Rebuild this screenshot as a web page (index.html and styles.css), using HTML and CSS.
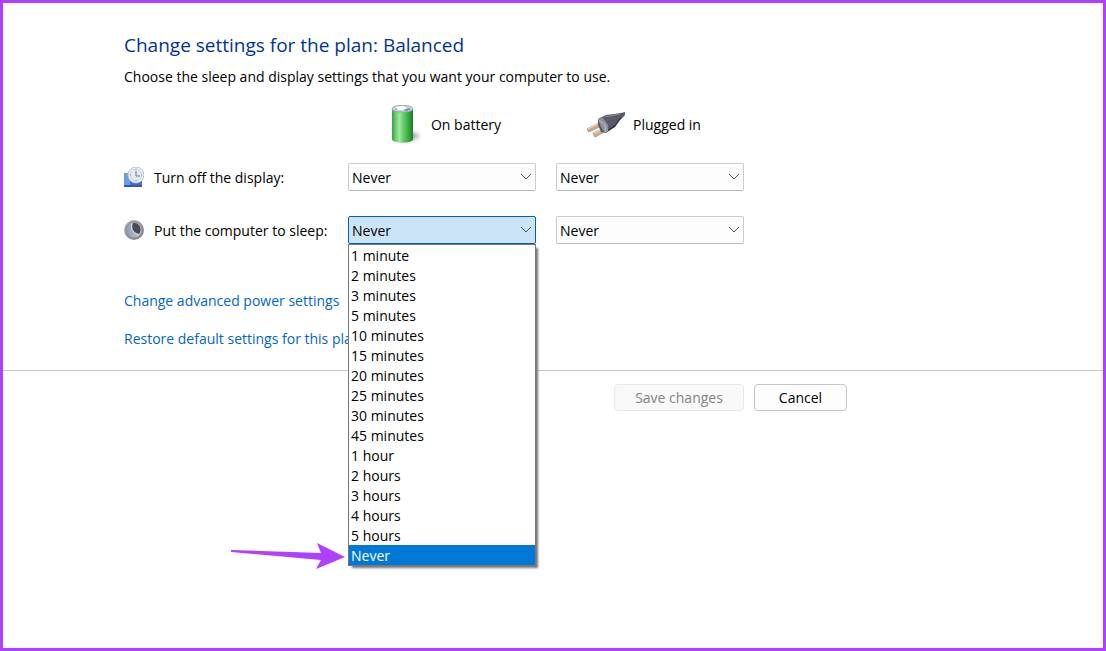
FILE: index.html
```html
<!DOCTYPE html>
<html lang="en">
<head>
    <meta charset="UTF-8">
    <meta name="viewport" content="width=device-width, initial-scale=1.0">
    <title>Edit Plan Settings</title>
    <link rel="stylesheet" href="styles.css">
</head>
<body>

    <main class="settings">
        <h1>Change settings for the plan: Balanced</h1>
        <p class="intro">Choose the sleep and display settings that you want your computer to use.</p>

        <div class="plan-grid">
            <div class="source battery">
                <svg width="40" height="40" viewBox="0 0 40 40">
                    <defs>
                        <linearGradient id="cell">
                            <stop offset="0" stop-color="#3f9a45"/>
                            <stop offset="0.15" stop-color="#5fc866"/>
                            <stop offset="0.35" stop-color="#a0e8a0"/>
                            <stop offset="0.55" stop-color="#62cc68"/>
                            <stop offset="0.8" stop-color="#35a840"/>
                            <stop offset="1" stop-color="#1c7a28"/>
                        </linearGradient>
                        <radialGradient id="shade">
                            <stop offset="0" stop-color="#666" stop-opacity="0.7"/>
                            <stop offset="1" stop-color="#999" stop-opacity="0"/>
                        </radialGradient>
                    </defs>
                    <ellipse cx="29" cy="31" rx="10" ry="7" fill="url(#shade)"/>
                    <path d="M9 4v30c0 5 21 5 21 0V4z" fill="url(#cell)"/>
                    <path d="M9 4c0-5 21-5 21 0 0 4-21 4-21 0z" fill="#d4d6e0" stroke="#8fae95"/>
                    <ellipse cx="18" cy="3" rx="5" ry="2" fill="#fff"/>
                    <path d="M20 5l6-2 2 1-4 2z" fill="#8587b5"/>
                    <path d="M11 5l3-2v2z" fill="#a5a7c4"/>
                </svg>
                <span>On battery</span>
            </div>
            <div class="source plugged">
                <svg width="40" height="40" viewBox="0 0 40 40">
                    <path d="M2 24l12-6 2 3-12 6z" fill="#dda27b" stroke="#a8998f"/>
                    <path d="M8 28l11-5 2 3-11 6z" fill="#e4aa82" stroke="#a8998f"/>
                    <path d="M3 24l10-5M9 28l9-4" stroke="#fbe0cc"/>
                    <path d="M13 14l8-4 8-1 7-1 4-1v3l-5 4-5 7-9 7-5-1-3-7z" fill="#5a5b69"/>
                    <path d="M13 14l5-1 5 7 0 7-3 1-4-6z" fill="#9092a0"/>
                    <path d="M14 15l6 5 1 7" fill="none" stroke="#b8bac6"/>
                    <path d="M20 12l9-2 6-1" fill="none" stroke="#8b8c9b"/>
                    <path d="M24 24l6-4 4-6 6-4-5 5-5 7-8 5z" fill="#292a38"/>
                </svg>
                <span>Plugged in</span>
            </div>

            <label class="row-label" for="displayBattery">
                <svg width="20" height="20" viewBox="0 0 20 20">
                    <path d="M0 6h18v13H0z" fill="#3f6fd6"/>
                    <path d="M0 6h6v12H0z" fill="#6c9bea"/>
                    <path d="M0 18h18v2H0z" fill="#3456b4"/>
                    <circle cx="12" cy="8" r="8" fill="#eef2f7" stroke="#bcc1cb" stroke-width="1"/>
                    <circle cx="12" cy="8" r="6" fill="#e2e9f1" stroke="#cdd3dc"/>
                    <path d="M12 4v5h4" fill="none" stroke="#6b7686"/>
                    <path d="M12 2v1M12 13v1M6 8h1M17 8h1" stroke="#8792a2"/>
                </svg>
                <span>Turn off the display:</span>
            </label>
            <select id="displayBattery"><option>Never</option></select>
            <select aria-label="Turn off the display, plugged in"><option>Never</option></select>

            <label class="row-label" for="sleepBattery">
                <svg width="20" height="20" viewBox="0 0 20 20">
                    <defs>
                        <linearGradient id="ring" x2="1" y2="1">
                            <stop offset="0" stop-color="#b8bbc0"/>
                            <stop offset="1" stop-color="#777b82"/>
                        </linearGradient>
                        <linearGradient id="night">
                            <stop offset="0" stop-color="#8d9cac"/>
                            <stop offset="1" stop-color="#c3ccd6"/>
                        </linearGradient>
                    </defs>
                    <circle cx="10" cy="10" r="10" fill="url(#ring)"/>
                    <circle cx="10" cy="10" r="8" fill="url(#night)" stroke="#8a8f97"/>
                    <path d="M9 3c6-1 10 6 6 11-5-1-8-5-6-11z" fill="#454b57"/>
                    <path d="M8 3c-2 6 1 10 7 12" fill="none" stroke="#d2dae2"/>
                </svg>
                <span>Put the computer to sleep:</span>
            </label>
            <div class="dropdown">
                <select id="sleepBattery" class="open"><option>Never</option></select>
                <select class="options" size="16" aria-label="Sleep time on battery">
                    <option>1 minute</option>
                    <option>2 minutes</option>
                    <option>3 minutes</option>
                    <option>5 minutes</option>
                    <option>10 minutes</option>
                    <option>15 minutes</option>
                    <option>20 minutes</option>
                    <option>25 minutes</option>
                    <option>30 minutes</option>
                    <option>45 minutes</option>
                    <option>1 hour</option>
                    <option>2 hours</option>
                    <option>3 hours</option>
                    <option>4 hours</option>
                    <option>5 hours</option>
                    <option selected>Never</option>
                </select>
                <svg class="pointer" width="116" height="28" viewBox="0 0 116 28">
                    <path d="M1 8l90 3-4-10 28 14-29 12 5-9L1 10z" fill="#b040ff"/>
                </svg>
            </div>
            <select aria-label="Put the computer to sleep, plugged in"><option>Never</option></select>
        </div>

        <nav class="links">
            <a href="#">Change advanced power settings</a>
            <a href="#">Restore default settings for this plan</a>
        </nav>
    </main>

    <footer>
        <div class="actions">
            <button class="save" disabled>Save changes</button>
            <button class="cancel">Cancel</button>
        </div>
    </footer>

</body>
</html>
```

FILE: styles.css
```css
* {
    box-sizing: border-box;
}
body {
    margin: 0;
    min-height: 100vh;
    border: 3px solid #b040ff;
    background-color: #fff;
    color: #000;
    font-family: "Open Sans", "Noto Sans", sans-serif;
    font-size: 14px;
    line-height: 20px;
}
h1 {
    margin: 0 0 8px;
    color: #003399;
    font-size: 19px;
    font-weight: normal;
    line-height: 28px;
}
.settings {
    max-width: 844px;
    padding: 28px 0 21px 121px;
}
.intro {
    margin: 0 0 18px;
}
.plan-grid {
    display: grid;
    grid-template-columns: 204px 188px 188px;
    column-gap: 20px;
    row-gap: 25px;
    align-items: center;
}
.source {
    display: flex;
    align-items: center;
    justify-content: center;
    gap: 8px;
    margin-bottom: -7px;
}
.battery {
    grid-column: 2;
}
.plugged {
    padding-right: 14px;
}
.row-label {
    display: flex;
    align-items: center;
    gap: 10px;
    white-space: nowrap;
}
.row-label span {
    padding-top: 2px;
}
select {
    width: 100%;
    height: 28px;
    padding: 2px 3px 0;
    border: 1px solid #ccc;
    border-bottom-color: #b8b8b8;
    border-radius: 2px;
    background: #fdfdfd url("data:image/svg+xml,%3Csvg xmlns='http://www.w3.org/2000/svg' width='10' height='6'%3E%3Cpath d='M0 0l5 5 5-5' fill='none' stroke='%23555'/%3E%3C/svg%3E") no-repeat right 4px center;
    color: #000;
    font: inherit;
    appearance: none;
}
select.open {
    display: block;
    border-color: #005fb8;
    background-color: #cce4f7;
}
.dropdown {
    position: relative;
}
.dropdown .options {
    position: absolute;
    z-index: 1;
    top: 100%;
    left: 0;
    height: auto;
    padding: 0;
    border: 1px solid #777;
    border-radius: 0;
    background: #fff;
    box-shadow: 3px 3px 2px -1px #777;
    overflow: hidden;
    outline: none;
}
.options option {
    height: 20px;
    min-height: 20px;
    padding: 1px 2px 0;
    line-height: 20px;
}
.options option:checked {
    background: linear-gradient(#0078d7, #0078d7);
    -webkit-text-fill-color: #fff;
}
.pointer {
    position: absolute;
    top: 326px;
    right: 100%;
    margin-right: 2px;
}
.links {
    display: flex;
    flex-direction: column;
    align-items: flex-start;
    gap: 18px;
    margin-top: 47px;
}
a {
    color: #0066cc;
    text-decoration: none;
}
footer {
    padding-top: 13px;
    border-top: 1px solid #c8c8c8;
}
.actions {
    display: flex;
    justify-content: flex-end;
    gap: 10px;
    max-width: 844px;
}
button {
    height: 27px;
    padding: 0;
    border: 1px solid #c4c4c4;
    border-radius: 4px;
    background-color: #fdfdfd;
    color: #000;
    font: inherit;
}
.save {
    width: 130px;
}
.cancel {
    width: 93px;
}
button:disabled {
    border-color: #f0e6e8;
    background-color: #f9f9f9;
    color: #838383;
}
```
